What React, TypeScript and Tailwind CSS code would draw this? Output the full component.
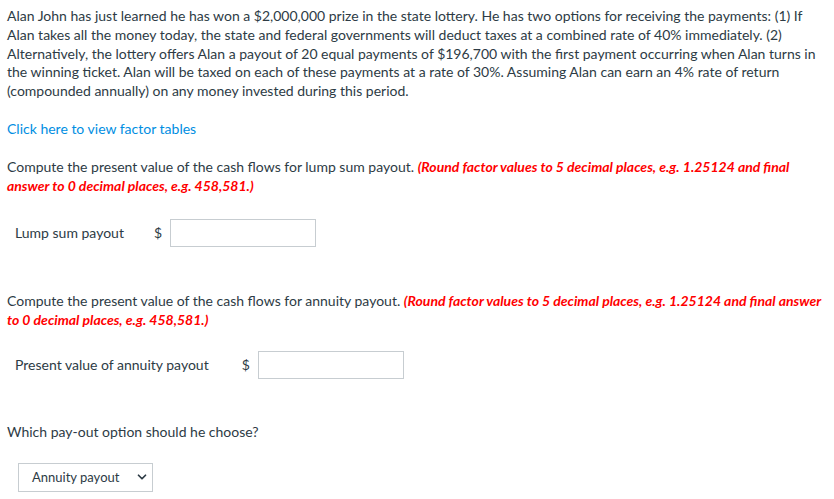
import { ChevronDown } from "lucide-react";

const red = "font-bold italic text-[#ff0000]";

function Field({ label, gap }: { label: string; gap: string }) {
  return (
    <div className="flex items-center pl-2">
      <span className={gap}>{label}</span>
      <span className="mr-[8px]">$</span>
      <div className="h-[28px] w-[146px] border border-[#c7cdd1] bg-white" />
    </div>
  );
}

export default function App() {
  return (
    <div className="min-h-[499px] bg-white px-[7px] pt-[7px] font-['Lato','Liberation_Sans',sans-serif] text-[14px] leading-[18.8px] text-[#2d3b45]">
      <p>
        Alan John has just learned he has won a $2,000,000 prize in the state lottery. He has two options for receiving the payments: (1) If
        Alan takes all the money today, the state and federal governments will deduct taxes at a combined rate of 40% immediately. (2)
        Alternatively, the lottery offers Alan a payout of 20 equal payments of $196,700 with the first payment occurring when Alan turns in
        the winning ticket. Alan will be taxed on each of these payments at a rate of 30%. Assuming Alan can earn an 4% rate of return
        (compounded annually) on any money invested during this period.
      </p>

      <a className="mt-[19px] block text-[#008ee2]">Click here to view factor tables</a>

      <p className="mt-[19px]">
        Compute the present value of the cash flows for lump sum payout.{" "}
        <span className={red}>
          (Round factor values to 5 decimal places, e.g. 1.25124 and final answer to 0 decimal places, e.g. 458,581.)
        </span>
      </p>

      <div className="mt-[24px]">
        <Field label="Lump sum payout" gap="mr-[30px]" />
      </div>

      <p className="mt-[45px]">
        Compute the present value of the cash flows for annuity payout.{" "}
        <span className={red}>
          (Round factor values to 5 decimal places, e.g. 1.25124 and final answer to 0 decimal places, e.g. 458,581.)
        </span>
      </p>

      <div className="mt-[21px]">
        <Field label="Present value of annuity payout" gap="mr-[33px]" />
      </div>

      <p className="mt-[44px]">Which pay-out option should he choose?</p>

      <div className="ml-[11px] mt-[21px] flex h-[29px] w-[135px] items-center justify-between border border-[#c7cdd1] bg-white pl-[13px] pr-[3px] text-[13px]">
        <span>Annuity payout</span>
        <ChevronDown size={14} strokeWidth={3} />
      </div>
    </div>
  );
}
